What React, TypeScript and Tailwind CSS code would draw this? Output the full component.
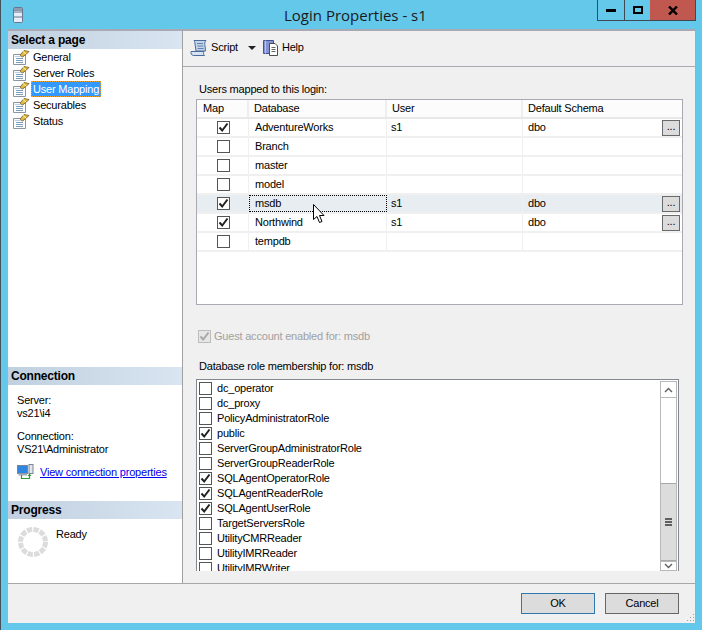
const PAGES = ["General", "Server Roles", "User Mapping", "Securables", "Status"];

const DATABASES = [
  { name: "AdventureWorks", on: true },
  { name: "Branch", on: false },
  { name: "master", on: false },
  { name: "model", on: false },
  { name: "msdb", on: true, active: true },
  { name: "Northwind", on: true },
  { name: "tempdb", on: false },
];

const ROLES = [
  { name: "dc_operator", on: false },
  { name: "dc_proxy", on: false },
  { name: "PolicyAdministratorRole", on: false },
  { name: "public", on: true },
  { name: "ServerGroupAdministratorRole", on: false },
  { name: "ServerGroupReaderRole", on: false },
  { name: "SQLAgentOperatorRole", on: true },
  { name: "SQLAgentReaderRole", on: true },
  { name: "SQLAgentUserRole", on: true },
  { name: "TargetServersRole", on: false },
  { name: "UtilityCMRReader", on: false },
  { name: "UtilityIMRReader", on: false },
  { name: "UtilityIMRWriter", on: false },
];

const Check = ({ on, muted }: { on: boolean; muted?: boolean }) => (
  <span
    className={`flex h-[13px] w-[13px] shrink-0 items-center justify-center border ${
      muted ? "border-[#bcbcbc] bg-[#e6e6e6]" : "border-[#555555] bg-white"
    }`}
  >
    {on && (
      <svg width="11" height="11" viewBox="0 0 11 11">
        <path
          d="M1.5 5.5 L4.2 8.5 L9.5 1.5"
          fill="none"
          stroke={muted ? "#a8a8a8" : "#222222"}
          strokeWidth="2"
        />
      </svg>
    )}
  </span>
);

const SectionHeader = ({ title }: { title: string }) => (
  <div className="flex h-[18px] items-center bg-gradient-to-r from-[#c0d0e0] to-[#d9e5f1] pl-[3px] text-[12px] font-bold leading-none tracking-[-0.2px] text-black">
    {title}
  </div>
);

const PageIcon = () => (
  <svg width="18" height="16" viewBox="0 0 18 16" className="shrink-0">
    <path d="M1.5 5.5H13.5V15.5H1.5Z" fill="#fdfdfd" stroke="#8b95a3" />
    <path d="M3 7.5H12" stroke="#b9cde2" />
    <path d="M4 9.5H11M4 11.5H11M4 13.5H11" stroke="#7f9dbd" />
    <path d="M8 6 L12 1.5 L17 2.5 L14.5 5 L10.5 8Z" fill="#e8b93a" stroke="#6b5c34" strokeWidth="0.8" />
    <path d="M11 2.5 L14 5" stroke="#fff4b8" />
  </svg>
);

const ServerIcon = () => (
  <svg width="10" height="16" viewBox="0 0 10 16">
    <rect x="0.5" y="0.5" width="9" height="15" rx="1" fill="#e6edf6" stroke="#66758f" />
    <rect x="1" y="1" width="8" height="3" fill="#8e9ab0" />
    <path d="M1 5H9M1 10H9" stroke="#66758f" />
  </svg>
);

const ScriptIcon = () => (
  <svg width="18" height="18" viewBox="0 0 18 18">
    <path d="M4 1.5H16C14.5 3 14.5 5 15 7L15.5 12H6L5 5C4.8 3 4.5 2 4 1.5Z" fill="#c5d5ea" stroke="#4a6c9c" />
    <path d="M7 4.5H13M7.3 7H13.3M7.6 9.5H13.6" stroke="#5f80ad" />
    <path d="M1 12.5H14C13 14 13.5 15.5 14.5 16.5H3.5C1.5 16.5 0.5 14 1 12.5Z" fill="#d8e3f1" stroke="#4a6c9c" />
  </svg>
);

const HelpIcon = () => (
  <svg width="17" height="17" viewBox="0 0 17 17">
    <path d="M1.5 1.5H11.5V14.5H1.5Z" fill="#8493d2" stroke="#46528f" />
    <path d="M3.5 1.5V14.5" stroke="#b9c3ea" />
    <path d="M7.5 4.5H13L15.5 7V16.5H7.5Z" fill="#ffffff" stroke="#4d4d4d" />
    <path d="M9.5 8.5H13.5M9.5 10.5H13.5M9.5 12.5H13.5" stroke="#666666" />
  </svg>
);

const ConnectionIcon = () => (
  <svg width="17" height="16" viewBox="0 0 17 16" className="shrink-0">
    <rect x="0.5" y="1.5" width="10" height="8" fill="#2f86e0" stroke="#7d8794" />
    <rect x="12" y="0.5" width="4" height="9" fill="#e2e6ec" stroke="#7d8794" />
    <path d="M1.5 10.5H10" stroke="#a4acb8" strokeWidth="2" />
    <path d="M4.5 11V14.5H12.5V11" fill="none" stroke="#2f9a2f" strokeWidth="1.2" />
    <path d="M10.5 12L12.5 9.5L14.5 12Z" fill="#2f9a2f" />
  </svg>
);

const Spinner = () => (
  <svg width="30" height="30" viewBox="0 0 30 30">
    <circle cx="15" cy="15" r="12.5" fill="none" stroke="#dcdcdc" strokeWidth="5" strokeDasharray="5.3 1.25" />
  </svg>
);

const Cursor = () => (
  <svg width="13" height="20" viewBox="0 0 13 20" className="absolute left-[312px] top-[204px]">
    <path d="M0.5 0.5V15.5L4 12.5L6.5 18.5L9 17.5L6.5 11.5H11Z" fill="#ffffff" stroke="#000000" />
  </svg>
);

const Button = ({ label, focused }: { label: string; focused?: boolean }) => (
  <button
    className={`h-[21px] w-[74px] border bg-[#dcdcdc] text-[11px] leading-none text-black ${
      focused ? "border-[#2f78ad]" : "border-[#666666]"
    }`}
  >
    {label}
  </button>
);

const Sidebar = () => (
  <aside className="flex w-[175px] shrink-0 flex-col border-r border-[#a0a0a0] bg-white text-[11px] leading-[16px] text-black">
    <SectionHeader title="Select a page" />
    <ul>
      {PAGES.map((page) => (
        <li key={page} className="flex h-[16px] items-center pl-[4px]">
          <PageIcon />
          {page === "User Mapping" ? (
            <span className="ml-[1px] flex h-[16px] items-center border border-dotted border-[#e9a030] bg-[#3399ff] px-[1px] text-white">
              {page}
            </span>
          ) : (
            <span className="ml-[3px]">{page}</span>
          )}
        </li>
      ))}
    </ul>

    <div className="mt-auto">
      <SectionHeader title="Connection" />
      <div className="h-[116px] pl-[9px] pt-[9px] leading-[13px]">
        <p>Server:</p>
        <p>vs21\i4</p>
        <p className="mt-[10px]">Connection:</p>
        <p>VS21\Administrator</p>
        <div className="mt-[8px] flex items-center gap-[6px]">
          <ConnectionIcon />
          <a className="whitespace-nowrap text-[#0000ee] underline">View connection properties</a>
        </div>
      </div>
      <SectionHeader title="Progress" />
      <div className="flex h-[64px] items-start gap-[8px] pl-[10px] pt-[8px]">
        <Spinner />
        <span className="pt-[1px] leading-[13px]">Ready</span>
      </div>
    </div>
  </aside>
);

const MappingGrid = () => (
  <div className="h-[206px] w-[487px] border border-[#a9a9b4] bg-white text-black">
    <div className="grid h-[19px] grid-cols-[52px_138px_136px_1fr] items-center border-b-2 border-[#e8e8e8] bg-[#fcfcfc] leading-none">
      {["Map", "Database", "User", "Default Schema"].map((title) => (
        <div
          key={title}
          className="flex h-full items-center border-r-2 border-[#eeeeee] pl-[5px] first:pl-[6px] last:border-r-0"
        >
          {title}
        </div>
      ))}
    </div>
    {DATABASES.map((db) => (
      <div
        key={db.name}
        className={`grid h-[19px] grid-cols-[52px_138px_136px_1fr] items-stretch border-b-2 border-[#f0f0f0] leading-none ${
          db.active ? "bg-[#e8edf1]" : ""
        }`}
      >
        <div className="flex items-center justify-center border-r border-[#f0f0f0] pl-[2px]">
          <Check on={db.on} />
        </div>
        <div
          className={`flex items-center ${
            db.active ? "border border-dotted border-black pl-[5px]" : "border-r border-[#f0f0f0] pl-[6px]"
          }`}
        >
          {db.name}
        </div>
        <div className="flex items-center border-r border-[#f0f0f0] pl-[4px]">{db.on ? "s1" : ""}</div>
        <div className="flex items-center justify-between pl-[5px] pr-[2px]">
          {db.on ? "dbo" : ""}
          {db.on && (
            <span className="flex h-[16px] w-[18px] items-center justify-center border border-[#6a6a6a] bg-[#dcdcdc] pb-[3px] text-[11px] leading-none">
              ...
            </span>
          )}
        </div>
      </div>
    ))}
  </div>
);

const RoleList = () => (
  <div className="relative h-[192px] w-[483px] overflow-hidden border-x border-t border-[#828790] bg-white leading-none text-black">
    <div className="pl-[2px] pt-[1px]">
      {ROLES.map((role) => (
        <div key={role.name} className="flex h-[15px] items-center gap-[5px]">
          <Check on={role.on} />
          <span>{role.name}</span>
        </div>
      ))}
    </div>
    <div className="absolute bottom-0 right-[1px] top-[1px] flex w-[17px] flex-col border border-[#b8b8b8] bg-white">
      <div className="flex h-[16px] items-center justify-center border-b border-[#b8b8b8]">
        <svg width="9" height="6" viewBox="0 0 9 6">
          <path d="M1 5L4.5 1.5L8 5" fill="none" stroke="#606060" strokeWidth="1.4" />
        </svg>
      </div>
      <div className="h-[85px]" />
      <div className="flex h-[78px] flex-col items-center justify-center gap-[1px] border-y border-[#a8a8a8] bg-[#dcdcdc]">
        <span className="h-[2px] w-[7px] bg-[#606060]" />
        <span className="h-[2px] w-[7px] bg-[#606060]" />
        <span className="h-[2px] w-[7px] bg-[#606060]" />
      </div>
      <div className="flex flex-1 items-center justify-center border-t border-[#b8b8b8]">
        <svg width="9" height="6" viewBox="0 0 9 6">
          <path d="M1 1L4.5 4.5L8 1" fill="none" stroke="#606060" strokeWidth="1.4" />
        </svg>
      </div>
    </div>
  </div>
);

const MainPanel = () => (
  <main className="flex min-w-0 flex-1 flex-col text-[11px] text-black">
    <div className="flex h-[36px] shrink-0 items-center border-b border-[#a9a9b4] pb-[2px] pl-[7px]">
      <ScriptIcon />
      <span className="ml-[3px]">Script</span>
      <svg width="8" height="4" viewBox="0 0 8 4" className="ml-[10px]">
        <path d="M0 0H8L4 4Z" fill="#222222" />
      </svg>
      <span className="ml-[6px] flex items-center gap-[3px]">
        <HelpIcon />
        Help
      </span>
    </div>
    <div className="flex flex-1 flex-col pl-[13px]">
      <p className="mt-[15px] pl-[3px] leading-[15px]">Users mapped to this login:</p>
      <div className="mt-[2px]">
        <MappingGrid />
      </div>
      <div className="mt-[24px] flex items-center gap-[3px] pl-[2px] text-[#a0a0a0]">
        <Check on muted />
        <span className="leading-[15px]">Guest account enabled for: msdb</span>
      </div>
      <p className="mt-[15px] pl-[3px] leading-[15px]">Database role membership for: msdb</p>
      <div className="mt-[5px]">
        <RoleList />
      </div>
    </div>
  </main>
);

export default function App() {
  return (
    <div
      className="relative flex h-[630px] w-[702px] flex-col overflow-hidden border-l border-[#44525c] bg-[#63c8ea] pb-[7px] pl-[7px] pr-[6px] tracking-[-0.2px]"
      style={{ fontFamily: '"Liberation Sans", Arial, sans-serif' }}
    >
      <header className="relative flex h-[29px] shrink-0 items-start justify-between">
        <div className="pl-[5px] pt-[7px]">
          <ServerIcon />
        </div>
        <h1
          className="absolute left-[276px] top-[6px] text-[15px] leading-[18px] tracking-normal text-[#1a1a1a]"
          style={{ fontFamily: '"Open Sans", sans-serif' }}
        >
          Login Properties - s1
        </h1>
        <div className="flex h-[21px] border-x border-b border-[#3d4a53]">
          <div className="flex w-[27px] items-center justify-center border-r border-[#3d4a53]">
            <span className="h-[3px] w-[10px] bg-black" />
          </div>
          <div className="flex w-[25px] items-center justify-center">
            <span className="h-[8px] w-[10px] border-2 border-black" />
          </div>
          <div className="flex w-[45px] items-center justify-center bg-[#c0584f]">
            <svg width="10" height="9" viewBox="0 0 10 9">
              <path d="M1 0.5L9 8.5M9 0.5L1 8.5" stroke="#000000" strokeWidth="2.4" />
            </svg>
          </div>
        </div>
      </header>

      <div className="flex min-h-0 flex-1 flex-col border-r border-t-2 border-[#a9a9b4] bg-[#f0f0f0]">
        <div className="flex min-h-0 flex-1">
          <Sidebar />
          <MainPanel />
        </div>
        <footer className="relative flex h-[40px] shrink-0 items-start justify-end gap-[10px] border-t border-[#a8a8a8] pr-[16px] pt-[9px]">
          <Button label="OK" focused />
          <Button label="Cancel" />
          <svg width="9" height="9" viewBox="0 0 9 9" className="absolute bottom-[1px] right-0">
            <path d="M7 1h1v1h-1zM4 4h1v1h-1zM7 4h1v1h-1zM1 7h1v1h-1zM4 7h1v1h-1zM7 7h1v1h-1z" fill="#a0a0a0" />
          </svg>
        </footer>
      </div>
      <Cursor />
    </div>
  );
}
